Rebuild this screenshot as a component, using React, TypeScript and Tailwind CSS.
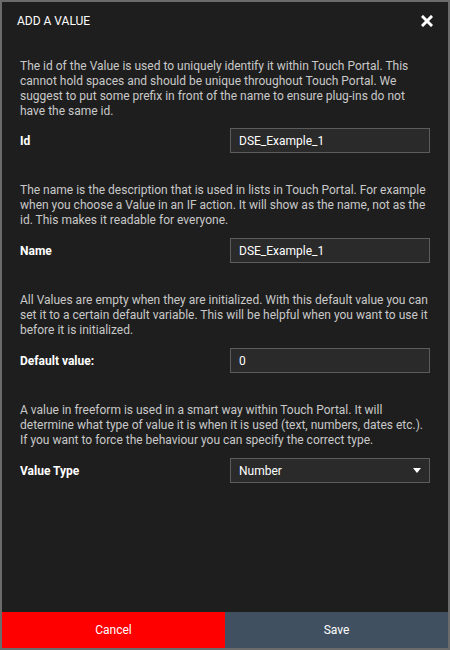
const sections = [
  {
    text: "The id of the Value is used to uniquely identify it within Touch Portal. This cannot hold spaces and should be unique throughout Touch Portal. We suggest to put some prefix in front of the name to ensure plug-ins do not have the same id.",
    label: "Id",
    value: "DSE_Example_1",
  },
  {
    text: "The name is the description that is used in lists in Touch Portal. For example when you choose a Value in an IF action. It will show as the name, not as the id. This makes it readable for everyone.",
    label: "Name",
    value: "DSE_Example_1",
  },
  {
    text: "All Values are empty when they are initialized. With this default value you can set it to a certain default variable. This will be helpful when you want to use it before it is initialized.",
    label: "Default value:",
    value: "0",
  },
]

function CloseIcon() {
  return (
    <svg width="12" height="12" viewBox="0 0 12 12">
      <path d="M2 2 L10 10 M10 2 L2 10" stroke="#ffffff" strokeWidth="3" strokeLinecap="square" />
    </svg>
  )
}

export default function App() {
  return (
    <div
      className="flex h-[650px] w-[450px] flex-col border-2 border-[#6b6b6b] bg-[#1e1e1e] text-[12px]"
      style={{ fontFamily: "Roboto, 'Liberation Sans', sans-serif" }}
    >
      <div className="flex h-[36px] items-center justify-between pl-[15px] pr-[15px] pt-[1px]">
        <span className="text-white">ADD A VALUE</span>
        <CloseIcon />
      </div>

      <div className="flex-1 px-[18px] pt-[21px]">
        {sections.map((s, i) => (
          <div key={s.label} className="mb-[30px]">
            <p className={i === 0 ? "mb-[9px] leading-[15px] text-[#c9c9c9]" : "mb-[10px] leading-[15px] text-[#c9c9c9]"}>
              {s.text}
            </p>
            <div className="flex items-center">
              <span className="flex-1 font-bold text-white">{s.label}</span>
              <div className="flex h-[25px] w-[200px] items-center border border-[#5c5c5c] bg-[#2a2a2a] px-[8px] text-white">
                {s.value}
              </div>
            </div>
          </div>
        ))}

        <div>
          <p className="mb-[10px] leading-[15px] text-[#c9c9c9]">
            A value in freeform is used in a smart way within Touch Portal. It will determine what type of value it is when it is used (text, numbers, dates etc.). If you want to force the behaviour you can specify the correct type.
          </p>
          <div className="flex items-center">
            <span className="flex-1 font-bold text-white">Value Type</span>
            <div className="flex h-[25px] w-[200px] items-center justify-between border border-[#5c5c5c] bg-[#2a2a2a] pl-[8px] pr-[8px] text-white">
              <span>Number</span>
              <svg width="8" height="5" viewBox="0 0 8 5">
                <path d="M0 0 H8 L4 5 Z" fill="#ffffff" />
              </svg>
            </div>
          </div>
        </div>
      </div>

      <div className="flex h-[36px]">
        <button className="flex-1 bg-[#ff0000] text-white">Cancel</button>
        <button className="flex-1 bg-[#405060] text-white">Save</button>
      </div>
    </div>
  )
}
